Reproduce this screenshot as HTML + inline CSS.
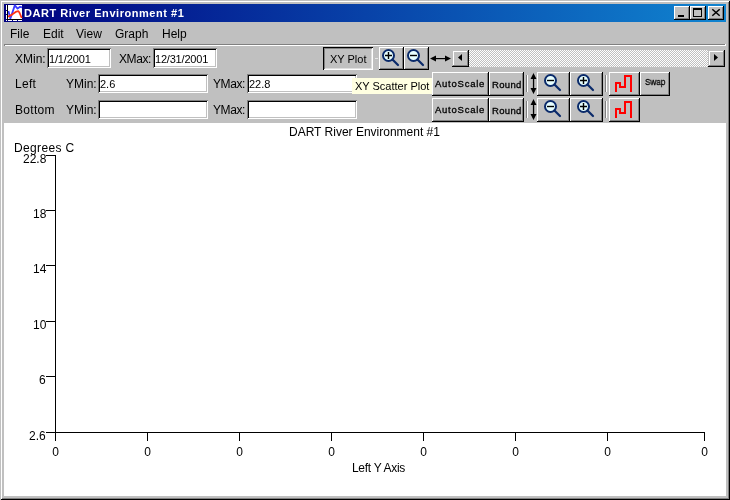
<!DOCTYPE html>
<html><head><meta charset="utf-8"><style>
html,body{margin:0;padding:0;}
body{width:730px;height:500px;overflow:hidden;position:relative;background:#c0c0c0;font-family:"Liberation Sans",sans-serif;}
.a{position:absolute;box-sizing:border-box;}
.t{position:absolute;white-space:nowrap;line-height:normal;will-change:transform;}
svg{position:absolute;overflow:visible;}
</style></head><body>
<div class="a " style="left:0px;top:0px;width:730px;height:500px;box-shadow: inset 1px 1px #c0c0c0, inset -1px -1px #000, inset 2px 2px #fff, inset -2px -2px #808080;"></div>
<div class="a " style="left:4px;top:4px;width:722px;height:18px;background:linear-gradient(to right,#000080,#1084d0);"></div>
<svg style="left:6px;top:5px" width="16" height="16" viewBox="0 0 16 16">
<rect x="2" y="0" width="14" height="14" fill="#fff"/>
<polyline points="2.4,6 4.4,13.5 8.8,0.4 11.6,3.6 14,1.8 16,2.4" fill="none" stroke="#3a3aff" stroke-width="1.8" stroke-linejoin="round"/>
<polyline points="2,11.8 6,9.6 10.4,6.6 12.4,6.2 13.2,7.2 15.8,13" fill="none" stroke="#ff3010" stroke-width="1.8" stroke-linejoin="round"/>
<rect x="1" y="0" width="1" height="15" fill="#000"/>
<rect x="1" y="14" width="15" height="1" fill="#000"/>
<g fill="#fff"><rect x="0" y="0" width="1" height="5"/><rect x="0" y="6" width="1" height="3"/><rect x="0" y="10" width="1" height="4"/>
<rect x="2" y="15" width="4" height="1"/><rect x="7" y="15" width="4" height="1"/><rect x="12" y="15" width="4" height="1"/><rect x="0" y="15" width="1" height="1"/></g>
</svg>
<div class="t" style="left:24px;top:7px;font-size:11px;font-weight:bold;color:#fff;letter-spacing:0.55px;">DART River Environment #1</div>
<div class="a " style="left:674px;top:6px;width:16px;height:14px;background:#c0c0c0;box-shadow: inset -1px -1px #000, inset 1px 1px #fff, inset -2px -2px #808080;"></div>
<div class="a " style="left:690px;top:6px;width:16px;height:14px;background:#c0c0c0;box-shadow: inset -1px -1px #000, inset 1px 1px #fff, inset -2px -2px #808080;"></div>
<div class="a " style="left:708px;top:6px;width:16px;height:14px;background:#c0c0c0;box-shadow: inset -1px -1px #000, inset 1px 1px #fff, inset -2px -2px #808080;"></div>
<div class="a " style="left:678px;top:15px;width:6px;height:2px;background:#000;"></div>
<div class="a " style="left:693px;top:8px;width:9px;height:9px;border:1px solid #000;border-top-width:2px;"></div>
<svg style="left:712px;top:9px" width="8" height="7" viewBox="0 0 8 7"><path d="M0.3,0.2 L7.7,6.8 M7.7,0.2 L0.3,6.8" stroke="#000" stroke-width="1.5" fill="none"/></svg>
<div class="t" style="left:10px;top:27px;font-size:12px;font-weight:normal;color:#000;">File</div>
<div class="t" style="left:43px;top:27px;font-size:12px;font-weight:normal;color:#000;">Edit</div>
<div class="t" style="left:76px;top:27px;font-size:12px;font-weight:normal;color:#000;">View</div>
<div class="t" style="left:115px;top:27px;font-size:12px;font-weight:normal;color:#000;">Graph</div>
<div class="t" style="left:162px;top:27px;font-size:12px;font-weight:normal;color:#000;">Help</div>
<div class="a " style="left:4px;top:44px;width:721px;height:1px;background:#808080;"></div>
<div class="a " style="left:4px;top:45px;width:1px;height:1px;background:#808080;"></div>
<div class="a " style="left:5px;top:45px;width:721px;height:1px;background:#fff;"></div>
<div class="a " style="left:725px;top:44px;width:1px;height:1px;background:#fff;"></div>
<div class="t" style="left:15px;top:52px;font-size:12px;font-weight:normal;color:#000;">XMin:</div>
<div class="a " style="left:47px;top:48px;width:64px;height:20px;background:#fff; box-shadow: inset 1px 1px #808080, inset -1px -1px #fff, inset 2px 2px #000, inset -2px -2px #c0c0c0;"></div>
<div class="t" style="left:49px;top:53px;font-size:11px;font-weight:normal;color:#000;letter-spacing:-0.15px;">1/1/2001</div>
<div class="t" style="left:119px;top:52px;font-size:12px;font-weight:normal;color:#000;letter-spacing:-0.4px;">XMax:</div>
<div class="a " style="left:153px;top:48px;width:64px;height:20px;background:#fff; box-shadow: inset 1px 1px #808080, inset -1px -1px #fff, inset 2px 2px #000, inset -2px -2px #c0c0c0;"></div>
<div class="t" style="left:155px;top:53px;font-size:11px;font-weight:normal;color:#000;letter-spacing:-0.2px;">12/31/2001</div>
<div class="a " style="left:323px;top:47px;width:50px;height:23px;box-shadow: inset 1px 1px #000, inset -1px -1px #fff, inset 2px 2px #808080, inset -2px -2px #dfdfdf;"></div>
<div class="t" style="left:330px;top:53px;font-size:11px;font-weight:normal;color:#000;">XY Plot</div>
<div class="a " style="left:375px;top:58px;width:3px;height:1px;background:#e8e8e8;"></div>
<div class="a " style="left:379px;top:47px;width:25px;height:23px;box-shadow: inset -1px -1px #000, inset 1px 1px #fff, inset -2px -2px #808080;"></div>
<div class="a " style="left:404px;top:47px;width:25px;height:23px;box-shadow: inset -1px -1px #000, inset 1px 1px #fff, inset -2px -2px #808080;"></div>
<svg style="left:382px;top:49px" width="18" height="18" viewBox="0 0 18 18">
<circle cx="6.5" cy="6.5" r="5.5" fill="#e8ffff" stroke="#0a2a6a" stroke-width="2"/>
<path d="M10.5,10.5 L16,16" stroke="#0a2a6a" stroke-width="2.2" stroke-linecap="round"/>
<path d="M3,6.5 H10 M6.5,3 V10" stroke="#000" stroke-width="1.4"/></svg>
<svg style="left:407px;top:49px" width="18" height="18" viewBox="0 0 18 18">
<circle cx="6.5" cy="6.5" r="5.5" fill="#e8ffff" stroke="#0a2a6a" stroke-width="2"/>
<path d="M10.5,10.5 L16,16" stroke="#0a2a6a" stroke-width="2.2" stroke-linecap="round"/>
<path d="M3,6.5 H10" stroke="#000" stroke-width="1.4"/></svg>
<svg style="left:430px;top:55px" width="22" height="7" viewBox="0 0 22 7">
<path d="M0,3.5 L6,0.5 L6,6.5 Z M21,3.5 L15,0.5 L15,6.5 Z" fill="#000"/><rect x="5" y="3" width="11" height="1.2" fill="#000"/></svg>
<div class="a " style="left:469px;top:50px;width:239px;height:17px;background-color:#c0c0c0;background-image:conic-gradient(#fff 25%,transparent 0 50%,#fff 0 75%,transparent 0);background-size:2px 2px;"></div>
<div class="a " style="left:452px;top:50px;width:17px;height:17px;background:#c0c0c0;box-shadow: inset -1px -1px #000, inset 1px 1px #c0c0c0, inset -2px -2px #808080, inset 2px 2px #fff;"></div>
<div class="a " style="left:708px;top:50px;width:17px;height:17px;background:#c0c0c0;box-shadow: inset -1px -1px #000, inset 1px 1px #c0c0c0, inset -2px -2px #808080, inset 2px 2px #fff;"></div>
<svg style="left:458px;top:54px" width="4" height="7" viewBox="0 0 4 7"><path d="M0,3.5 L4,0 L4,7 Z" fill="#000"/></svg>
<svg style="left:714px;top:54px" width="4" height="7" viewBox="0 0 4 7"><path d="M4,3.5 L0,0 L0,7 Z" fill="#000"/></svg>
<div class="t" style="left:15px;top:77px;font-size:12px;font-weight:normal;color:#000;letter-spacing:0.3px;">Left</div>
<div class="t" style="left:66px;top:77px;font-size:12px;font-weight:normal;color:#000;">YMin:</div>
<div class="a " style="left:98px;top:74px;width:110px;height:19px;background:#fff; box-shadow: inset 1px 1px #808080, inset -1px -1px #fff, inset 2px 2px #000, inset -2px -2px #c0c0c0;"></div>
<div class="t" style="left:100px;top:78px;font-size:11px;font-weight:normal;color:#000;">2.6</div>
<div class="t" style="left:213px;top:77px;font-size:12px;font-weight:normal;color:#000;letter-spacing:-0.4px;">YMax:</div>
<div class="a " style="left:247px;top:74px;width:110px;height:19px;background:#fff; box-shadow: inset 1px 1px #808080, inset -1px -1px #fff, inset 2px 2px #000, inset -2px -2px #c0c0c0;"></div>
<div class="t" style="left:249px;top:78px;font-size:11px;font-weight:normal;color:#000;">22.8</div>
<div class="a " style="left:432px;top:72px;width:57px;height:24px;box-shadow: inset -1px -1px #000, inset 1px 1px #fff, inset -2px -2px #808080;"></div>
<div class="t" style="left:435px;top:78px;font-size:9.5px;font-weight:normal;color:#000;letter-spacing:0.75px;-webkit-text-stroke:0.3px #000;">AutoScale</div>
<div class="a " style="left:489px;top:72px;width:35px;height:24px;box-shadow: inset -1px -1px #000, inset 1px 1px #fff, inset -2px -2px #808080;"></div>
<div class="t" style="left:492px;top:79px;font-size:9.5px;font-weight:normal;color:#000;letter-spacing:0.35px;-webkit-text-stroke:0.3px #000;">Round</div>
<div class="a " style="left:526px;top:75px;width:1px;height:17px;background:#808080;"></div>
<div class="a " style="left:527px;top:75px;width:1px;height:17px;background:#fff;"></div>
<svg style="left:530px;top:73px" width="7" height="21" viewBox="0 0 7 21">
<path d="M3.5,0 L6.5,6 L0.5,6 Z M3.5,21 L6.5,15 L0.5,15 Z" fill="#000"/><rect x="2.9" y="5" width="1.3" height="11" fill="#000"/></svg>
<div class="a " style="left:537px;top:72px;width:33px;height:24px;box-shadow: inset -1px -1px #000, inset 1px 1px #fff, inset -2px -2px #808080;"></div>
<div class="a " style="left:570px;top:72px;width:33px;height:24px;box-shadow: inset -1px -1px #000, inset 1px 1px #fff, inset -2px -2px #808080;"></div>
<svg style="left:544px;top:74px" width="18" height="18" viewBox="0 0 18 18">
<circle cx="6.5" cy="6.5" r="5.5" fill="#e8ffff" stroke="#0a2a6a" stroke-width="2"/>
<path d="M10.5,10.5 L16,16" stroke="#0a2a6a" stroke-width="2.2" stroke-linecap="round"/>
<path d="M3,6.5 H10" stroke="#000" stroke-width="1.4"/></svg>
<svg style="left:577px;top:74px" width="18" height="18" viewBox="0 0 18 18">
<circle cx="6.5" cy="6.5" r="5.5" fill="#e8ffff" stroke="#0a2a6a" stroke-width="2"/>
<path d="M10.5,10.5 L16,16" stroke="#0a2a6a" stroke-width="2.2" stroke-linecap="round"/>
<path d="M3,6.5 H10 M6.5,3 V10" stroke="#000" stroke-width="1.4"/></svg>
<div class="a " style="left:605px;top:75px;width:1px;height:17px;background:#808080;"></div>
<div class="a " style="left:606px;top:75px;width:1px;height:17px;background:#fff;"></div>
<div class="a " style="left:609px;top:72px;width:31px;height:24px;box-shadow: inset -1px -1px #000, inset 1px 1px #fff, inset -2px -2px #808080;"></div>
<svg style="left:609px;top:72px" width="31" height="24" viewBox="609 72 31 24">
<path d="M616,92 V83 H620 V87 H625 V76 H631 V92" fill="none" stroke="#ff0000" stroke-width="2"/></svg>
<div class="a " style="left:640px;top:72px;width:30px;height:24px;box-shadow: inset -1px -1px #000, inset 1px 1px #fff, inset -2px -2px #808080;"></div>
<div class="t" style="left:645px;top:77px;font-size:9px;font-weight:normal;color:#000;transform:scaleX(0.9);transform-origin:0 0;-webkit-text-stroke:0.3px #000;">Swap</div>
<div class="t" style="left:15px;top:103px;font-size:12px;font-weight:normal;color:#000;letter-spacing:0.3px;">Bottom</div>
<div class="t" style="left:66px;top:103px;font-size:12px;font-weight:normal;color:#000;">YMin:</div>
<div class="a " style="left:98px;top:100px;width:110px;height:19px;background:#fff; box-shadow: inset 1px 1px #808080, inset -1px -1px #fff, inset 2px 2px #000, inset -2px -2px #c0c0c0;"></div>
<div class="t" style="left:213px;top:103px;font-size:12px;font-weight:normal;color:#000;letter-spacing:-0.4px;">YMax:</div>
<div class="a " style="left:247px;top:100px;width:110px;height:19px;background:#fff; box-shadow: inset 1px 1px #808080, inset -1px -1px #fff, inset 2px 2px #000, inset -2px -2px #c0c0c0;"></div>
<div class="a " style="left:432px;top:98px;width:57px;height:24px;box-shadow: inset -1px -1px #000, inset 1px 1px #fff, inset -2px -2px #808080;"></div>
<div class="t" style="left:435px;top:104px;font-size:9.5px;font-weight:normal;color:#000;letter-spacing:0.75px;-webkit-text-stroke:0.3px #000;">AutoScale</div>
<div class="a " style="left:489px;top:98px;width:35px;height:24px;box-shadow: inset -1px -1px #000, inset 1px 1px #fff, inset -2px -2px #808080;"></div>
<div class="t" style="left:492px;top:105px;font-size:9.5px;font-weight:normal;color:#000;letter-spacing:0.35px;-webkit-text-stroke:0.3px #000;">Round</div>
<div class="a " style="left:526px;top:101px;width:1px;height:17px;background:#808080;"></div>
<div class="a " style="left:527px;top:101px;width:1px;height:17px;background:#fff;"></div>
<svg style="left:530px;top:99px" width="7" height="21" viewBox="0 0 7 21">
<path d="M3.5,0 L6.5,6 L0.5,6 Z M3.5,21 L6.5,15 L0.5,15 Z" fill="#000"/><rect x="2.9" y="5" width="1.3" height="11" fill="#000"/></svg>
<div class="a " style="left:537px;top:98px;width:33px;height:24px;box-shadow: inset -1px -1px #000, inset 1px 1px #fff, inset -2px -2px #808080;"></div>
<div class="a " style="left:570px;top:98px;width:33px;height:24px;box-shadow: inset -1px -1px #000, inset 1px 1px #fff, inset -2px -2px #808080;"></div>
<svg style="left:544px;top:100px" width="18" height="18" viewBox="0 0 18 18">
<circle cx="6.5" cy="6.5" r="5.5" fill="#e8ffff" stroke="#0a2a6a" stroke-width="2"/>
<path d="M10.5,10.5 L16,16" stroke="#0a2a6a" stroke-width="2.2" stroke-linecap="round"/>
<path d="M3,6.5 H10" stroke="#000" stroke-width="1.4"/></svg>
<svg style="left:577px;top:100px" width="18" height="18" viewBox="0 0 18 18">
<circle cx="6.5" cy="6.5" r="5.5" fill="#e8ffff" stroke="#0a2a6a" stroke-width="2"/>
<path d="M10.5,10.5 L16,16" stroke="#0a2a6a" stroke-width="2.2" stroke-linecap="round"/>
<path d="M3,6.5 H10 M6.5,3 V10" stroke="#000" stroke-width="1.4"/></svg>
<div class="a " style="left:605px;top:101px;width:1px;height:17px;background:#808080;"></div>
<div class="a " style="left:606px;top:101px;width:1px;height:17px;background:#fff;"></div>
<div class="a " style="left:609px;top:98px;width:31px;height:24px;box-shadow: inset -1px -1px #000, inset 1px 1px #fff, inset -2px -2px #808080;"></div>
<svg style="left:609px;top:98px" width="31" height="24" viewBox="609 98 31 24">
<path d="M616,118 V109 H620 V113 H625 V102 H631 V118" fill="none" stroke="#ff0000" stroke-width="2"/></svg>
<div class="a " style="left:352px;top:78px;width:80px;height:16px;background:#ffffe1;"></div>
<div class="t" style="left:355px;top:80px;font-size:11px;font-weight:normal;color:#000;">XY Scatter Plot</div>
<div class="a " style="left:4px;top:123px;width:722px;height:373px;background:#fff;"></div>
<div class="t" style="left:289px;top:125px;font-size:12px;font-weight:normal;color:#000;">DART River Environment #1</div>
<div class="t" style="left:14px;top:141px;font-size:12px;font-weight:normal;color:#000;letter-spacing:0.35px;">Degrees C</div>
<svg style="left:0;top:0" width="730" height="500" viewBox="0 0 730 500" shape-rendering="crispEdges">
<rect x="55" y="155" width="1" height="286" fill="#000"/>
<rect x="46" y="432" width="659" height="1" fill="#000"/>
<rect x="46" y="155" width="9" height="1" fill="#000"/>
<rect x="46" y="210" width="9" height="1" fill="#000"/>
<rect x="46" y="265" width="9" height="1" fill="#000"/>
<rect x="46" y="321" width="9" height="1" fill="#000"/>
<rect x="46" y="376" width="9" height="1" fill="#000"/>
<rect x="147" y="432" width="1" height="9" fill="#000"/>
<rect x="239" y="432" width="1" height="9" fill="#000"/>
<rect x="331" y="432" width="1" height="9" fill="#000"/>
<rect x="423" y="432" width="1" height="9" fill="#000"/>
<rect x="515" y="432" width="1" height="9" fill="#000"/>
<rect x="607" y="432" width="1" height="9" fill="#000"/>
<rect x="704" y="432" width="1" height="9" fill="#000"/>
</svg>
<div class="t" style="right:684px;top:152px;font-size:12px;">22.8</div>
<div class="t" style="right:684px;top:207px;font-size:12px;">18</div>
<div class="t" style="right:684px;top:262px;font-size:12px;">14</div>
<div class="t" style="right:684px;top:318px;font-size:12px;">10</div>
<div class="t" style="right:684px;top:373px;font-size:12px;">6</div>
<div class="t" style="right:684px;top:429px;font-size:12px;">2.6</div>
<div class="t" style="left:45px;width:21px;text-align:center;top:445px;font-size:12px;">0</div>
<div class="t" style="left:137px;width:21px;text-align:center;top:445px;font-size:12px;">0</div>
<div class="t" style="left:229px;width:21px;text-align:center;top:445px;font-size:12px;">0</div>
<div class="t" style="left:321px;width:21px;text-align:center;top:445px;font-size:12px;">0</div>
<div class="t" style="left:413px;width:21px;text-align:center;top:445px;font-size:12px;">0</div>
<div class="t" style="left:505px;width:21px;text-align:center;top:445px;font-size:12px;">0</div>
<div class="t" style="left:597px;width:21px;text-align:center;top:445px;font-size:12px;">0</div>
<div class="t" style="left:694px;width:21px;text-align:center;top:445px;font-size:12px;">0</div>
<div class="t" style="left:352px;top:461px;font-size:12px;font-weight:normal;color:#000;letter-spacing:-0.3px;">Left Y Axis</div>
</body></html>
